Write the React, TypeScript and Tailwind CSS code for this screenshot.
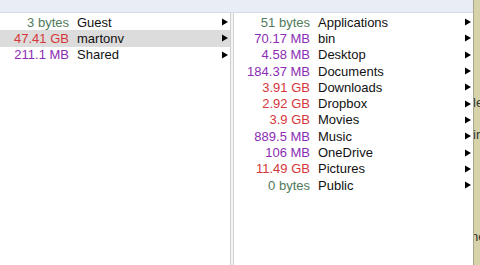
import React from "react";

type Entry = { size: string; unit: "bytes" | "MB" | "GB"; name: string; selected?: boolean };

const users: Entry[] = [
  { size: "3", unit: "bytes", name: "Guest" },
  { size: "47.41", unit: "GB", name: "martonv", selected: true },
  { size: "211.1", unit: "MB", name: "Shared" },
];

const home: Entry[] = [
  { size: "51", unit: "bytes", name: "Applications" },
  { size: "70.17", unit: "MB", name: "bin" },
  { size: "4.58", unit: "MB", name: "Desktop" },
  { size: "184.37", unit: "MB", name: "Documents" },
  { size: "3.91", unit: "GB", name: "Downloads" },
  { size: "2.92", unit: "GB", name: "Dropbox" },
  { size: "3.9", unit: "GB", name: "Movies" },
  { size: "889.5", unit: "MB", name: "Music" },
  { size: "106", unit: "MB", name: "OneDrive" },
  { size: "11.49", unit: "GB", name: "Pictures" },
  { size: "0", unit: "bytes", name: "Public" },
];

// size colour depends on unit
const unitColor = {
  bytes: "text-[#4f7a5c]",
  MB: "text-[#8b2db3]",
  GB: "text-[#d6363a]",
};

function Arrow() {
  return (
    <svg width="6" height="8" viewBox="0 0 6 8" className="shrink-0">
      <path d="M0 0.5 L6 4 L0 7.5 Z" fill="#000" />
    </svg>
  );
}

function Column({ items, sizeWidth }: { items: Entry[]; sizeWidth: string }) {
  return (
    <div className="flex flex-col pt-[1px]">
      {items.map((e) => (
        <div
          key={e.name}
          className={`flex items-center h-[16.3px] pr-[2px] ${e.selected ? "bg-[#dcdcdc]" : ""}`}
        >
          <span className={`${sizeWidth} text-right shrink-0 ${unitColor[e.unit]}`}>
            {e.size} {e.unit}
          </span>
          <span className="flex-1 pl-[8px] text-[#111]">{e.name}</span>
          <Arrow />
        </div>
      ))}
    </div>
  );
}

export default function App() {
  return (
    <div
      className="flex w-[480px] h-[265px] bg-white overflow-hidden text-[13px] leading-none"
      style={{ fontFamily: '"Liberation Sans", Arial, sans-serif' }}
    >
      <div className="flex flex-col w-[473px] shrink-0">
        <div className="h-[13px] bg-[#e9edf6] border-b border-[#d6dae2]" />
        <div className="flex flex-1">
          <div className="w-[231px] border-r border-[#cfcfcf]">
            <Column items={users} sizeWidth="w-[69px]" />
          </div>
          <div className="w-[3px] bg-[#f3f3f3] border-r border-[#d4d4d4]" />
          <div className="flex-1">
            <Column items={home} sizeWidth="w-[76px]" />
          </div>
        </div>
      </div>
      <div className="flex-1 bg-[#d6d3ab] border-l border-[#a9a68a] flex flex-col text-[#333] overflow-hidden">
        <span className="mt-[96px] -ml-[1px]">le</span>
        <span className="mt-[19px] -ml-[1px]">ir</span>
        <span className="mt-[89px] -ml-[3px]">ne</span>
      </div>
    </div>
  );
}
